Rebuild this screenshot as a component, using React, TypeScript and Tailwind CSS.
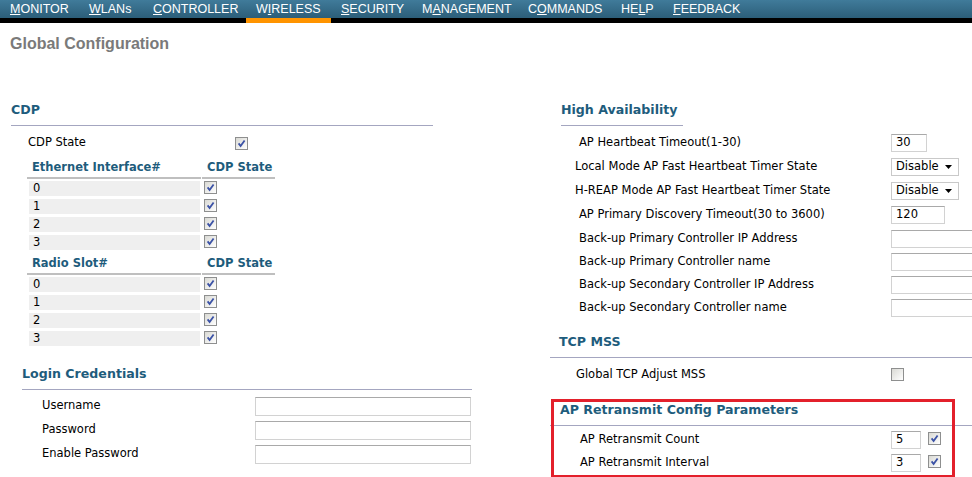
import type { ReactNode } from 'react'

const NAV = [
  { pre: '', key: 'M', post: 'ONITOR', w: 'w-[79px]' },
  { pre: '', key: 'W', post: 'LANs', w: 'w-[64px]' },
  { pre: '', key: 'C', post: 'ONTROLLER', w: 'w-[103px]' },
  { pre: 'W', key: 'I', post: 'RELESS', w: 'w-[85px]', active: true },
  { pre: '', key: 'S', post: 'ECURITY', w: 'w-[81px]' },
  { pre: 'M', key: 'A', post: 'NAGEMENT', w: 'w-[106px]' },
  { pre: 'C', key: 'O', post: 'MMANDS', w: 'w-[93px]' },
  { pre: 'HE', key: 'L', post: 'P', w: 'w-[52px]' },
  { pre: '', key: 'F', post: 'EEDBACK', w: 'w-[84px]' },
]

function Check({ on = true }: { on?: boolean }) {
  return (
    <span className="inline-flex h-[13px] w-[13px] shrink-0 items-center justify-center border border-[#8e8f8f] bg-gradient-to-br from-[#d9d9d4] to-white">
      {on && (
        <svg width="9" height="9" viewBox="0 0 9 9">
          <path d="M1.6 4.4 L3.6 7 L7.6 1.4" fill="none" stroke="#3b52a6" strokeWidth="1.8" />
        </svg>
      )}
    </span>
  )
}

function TextBox({ w, value = '' }: { w: string; value?: string }) {
  return (
    <div className={`${w} flex h-[18px] shrink-0 items-center border border-[#d2d2d2] border-t-[#a9a9a9] bg-white pl-[4px] text-[11.5px] text-black`}>
      {value}
    </div>
  )
}

function Select() {
  return (
    <div className="flex h-[18px] w-[68px] shrink-0 items-center justify-between border border-[#c9c9c9] bg-white pl-[4px] pr-[6px] text-[11.5px] text-black">
      Disable
      <svg width="7" height="4" viewBox="0 0 7 4">
        <path d="M0 0 H7 L3.5 4 Z" fill="#000" />
      </svg>
    </div>
  )
}

function Heading({ children, className = '' }: { children: ReactNode; className?: string }) {
  return (
    <div className={`border-b border-[#a4a6c0] pt-[2px] pb-[7px] text-[12.6px] leading-[16px] font-bold text-[#1e5c7c] ${className}`}>
      {children}
    </div>
  )
}

function CdpTable({ title, className = '' }: { title: string; className?: string }) {
  return (
    <div className={`ml-[16px] ${className}`}>
      <div className="flex gap-[1px] text-[11.5px] leading-[14px] font-bold text-[#1e5c7c]">
        <div className="w-[174px] border-b-2 border-[#bfbfbf] pb-[3px] pl-[5px]">{title}</div>
        <div className="w-[73px] border-b-2 border-[#bfbfbf] pb-[3px] pl-[5px]">CDP State</div>
      </div>
      <div className="flex flex-col gap-[3px] pt-[2px]">
        {['0', '1', '2', '3'].map((n) => (
          <div key={n} className="flex h-[15px] items-center">
            <div className="ml-[2px] flex h-[15px] w-[171px] items-center bg-[#efefef] pl-[4px] leading-[15px]">{n}</div>
            <div className="ml-[4px]">
              <Check />
            </div>
          </div>
        ))}
      </div>
    </div>
  )
}

function Row({ label, pl, h, children }: { label: string; pl: string; h: string; children: ReactNode }) {
  return (
    <div className={`flex ${h} items-center`}>
      <div className={`w-[341px] shrink-0 ${pl}`}>{label}</div>
      {children}
    </div>
  )
}

export default function App() {
  return (
    <div className="h-[477px] w-[972px] overflow-hidden bg-white font-['DejaVu_Sans',sans-serif] text-[11.5px] text-black">
      <div className="h-[23px] bg-black">
        <div className="flex h-[18px] bg-gradient-to-b from-[#407b9a] to-[#2c5e79] font-['Liberation_Sans',Arial,sans-serif] text-[12.5px] text-white">
          {NAV.map((n) => (
            <div
              key={n.key + n.post}
              className={`${n.w} h-[23px] shrink-0 pl-[10px] leading-[18px] ${n.active ? 'border-b-[5px] border-[#ff9400]' : ''}`}
            >
              {n.pre}
              <span className="underline underline-offset-[1px]">{n.key}</span>
              {n.post}
            </div>
          ))}
        </div>
      </div>

      <div className="mt-[12px] h-[18px] pl-[10px] font-['Liberation_Sans',Arial,sans-serif] text-[16px] leading-[18px] font-bold text-[#7a7a7a]">
        Global Configuration
      </div>

      <div className="mt-[47px] flex">
        {/* left column */}
        <div className="w-[550px] shrink-0 pl-[11px]">
          <Heading className="w-[422px]">CDP</Heading>
          <div className="flex h-[34px] items-center">
            <div className="w-[224px] pl-[17px]">CDP State</div>
            <Check />
          </div>
          <CdpTable title="Ethernet Interface#" />
          <CdpTable title="Radio Slot#" className="mt-[6px]" />

          <div className="mt-[18px] ml-[11px] w-[450px]">
            <Heading>Login Credentials</Heading>
            <div className="pt-[4px]">
              {['Username', 'Password', 'Enable Password'].map((l) => (
                <div key={l} className="flex h-[24px] items-center">
                  <div className="w-[233px] pl-[20px]">{l}</div>
                  <div className="h-[19px] w-[216px] border border-[#d2d2d2] border-t-[#a9a9a9] bg-white" />
                </div>
              ))}
            </div>
          </div>
        </div>

        {/* right column */}
        <div className="min-w-0 flex-1">
          <Heading className="ml-[11px] w-[122px]">High Availability</Heading>
          <div className="pt-[5px]">
            <Row label="AP Heartbeat Timeout(1-30)" pl="pl-[29px]" h="h-[24px]">
              <TextBox w="w-[36px]" value="30" />
            </Row>
            <Row label="Local Mode AP Fast Heartbeat Timer State" pl="pl-[25px]" h="h-[24px]">
              <Select />
            </Row>
            <Row label="H-REAP Mode AP Fast Heartbeat Timer State" pl="pl-[25px]" h="h-[24px]">
              <Select />
            </Row>
            <Row label="AP Primary Discovery Timeout(30 to 3600)" pl="pl-[29px]" h="h-[24px]">
              <TextBox w="w-[54px]" value="120" />
            </Row>
            <Row label="Back-up Primary Controller IP Address" pl="pl-[29px]" h="h-[23px]">
              <TextBox w="w-[120px]" />
            </Row>
            <Row label="Back-up Primary Controller name" pl="pl-[29px]" h="h-[23px]">
              <TextBox w="w-[120px]" />
            </Row>
            <Row label="Back-up Secondary Controller IP Address" pl="pl-[29px]" h="h-[23px]">
              <TextBox w="w-[120px]" />
            </Row>
            <Row label="Back-up Secondary Controller name" pl="pl-[29px]" h="h-[23px]">
              <TextBox w="w-[120px]" />
            </Row>
          </div>

          <Heading className="mt-[13px] pl-[9px]">TCP MSS</Heading>
          <Row label="Global TCP Adjust MSS" pl="pl-[26px]" h="h-[33px]">
            <Check on={false} />
          </Row>

          <div className="relative mt-[9px]">
            <Heading className="pl-[10px]">AP Retransmit Config Parameters</Heading>
            <div className="pt-[2px]">
              <Row label="AP Retransmit Count" pl="pl-[30px]" h="h-[23px]">
                <TextBox w="w-[30px]" value="5" />
                <span className="ml-[7px]">
                  <Check />
                </span>
              </Row>
              <Row label="AP Retransmit Interval" pl="pl-[30px]" h="h-[23px]">
                <TextBox w="w-[30px]" value="3" />
                <span className="ml-[7px]">
                  <Check />
                </span>
              </Row>
            </div>
            <div className="pointer-events-none absolute top-[-1px] left-[1px] h-[79px] w-[404px] border-[3px] border-[#e3202b]" />
          </div>
        </div>
      </div>
    </div>
  )
}
